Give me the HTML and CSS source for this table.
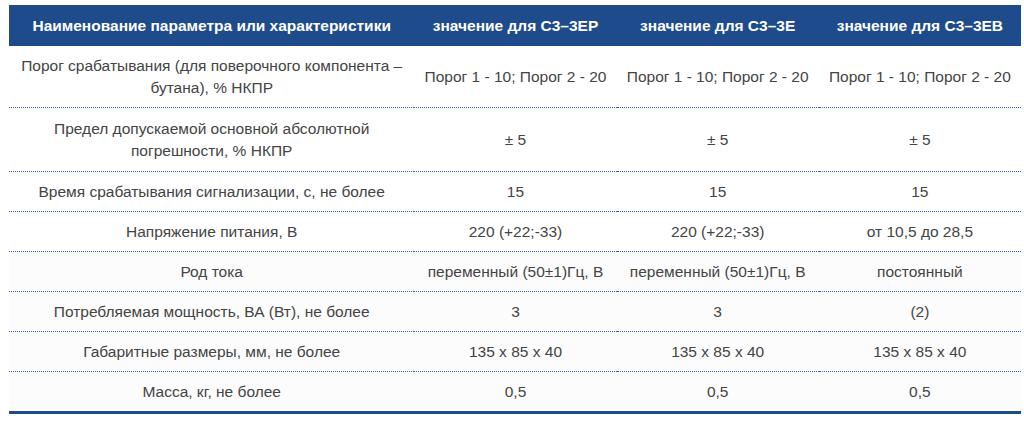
FILE: index.html
```html
<!DOCTYPE html>
<html lang="ru">
<head>
<meta charset="utf-8">
<title>Характеристики</title>
<link rel="stylesheet" href="styles.css">
</head>
<body>
<div class="wrap">
<table class="spec">
  <colgroup>
    <col class="c-name">
    <col class="c-val">
    <col class="c-val">
    <col class="c-val">
  </colgroup>
  <thead>
    <tr>
      <th>Наименование параметра или характеристики</th>
      <th>значение для С3–3ЕР</th>
      <th>значение для С3–3Е</th>
      <th>значение для С3–3ЕВ</th>
    </tr>
  </thead>
  <tbody>
    <tr>
      <td>Порог срабатывания (для поверочного компонента – бутана), % НКПР</td>
      <td>Порог 1 - 10; Порог 2 - 20</td>
      <td>Порог 1 - 10; Порог 2 - 20</td>
      <td>Порог 1 - 10; Порог 2 - 20</td>
    </tr>
    <tr class="tall">
      <td>Предел допускаемой основной абсолютной погрешности, % НКПР</td>
      <td>± 5</td>
      <td>± 5</td>
      <td>± 5</td>
    </tr>
    <tr>
      <td>Время срабатывания сигнализации, с, не более</td>
      <td>15</td>
      <td>15</td>
      <td>15</td>
    </tr>
    <tr>
      <td>Напряжение питания, В</td>
      <td>220 (+22;-33)</td>
      <td>220 (+22;-33)</td>
      <td>от 10,5 до 28,5</td>
    </tr>
    <tr>
      <td>Род тока</td>
      <td>переменный (50±1)Гц, В</td>
      <td>переменный (50±1)Гц, В</td>
      <td>постоянный</td>
    </tr>
    <tr>
      <td>Потребляемая мощность, ВА (Вт), не более</td>
      <td>3</td>
      <td>3</td>
      <td>(2)</td>
    </tr>
    <tr>
      <td>Габаритные размеры, мм, не более</td>
      <td>135 x 85 x 40</td>
      <td>135 x 85 x 40</td>
      <td>135 x 85 x 40</td>
    </tr>
    <tr>
      <td>Масса, кг, не более</td>
      <td>0,5</td>
      <td>0,5</td>
      <td>0,5</td>
    </tr>
  </tbody>
</table>
</div>
</body>
</html>
```

FILE: styles.css
```css
html, body {
  margin: 0;
  padding: 0;
  background: #ffffff;
}

.wrap {
  padding: 5px 3px 0 9px;
}

.spec {
  width: 1012px;
  border-collapse: collapse;
  table-layout: fixed;
  font-family: "Liberation Sans", Arial, sans-serif;
  font-size: 15.5px;
  line-height: 22px;
  color: #444444;
  border-bottom: 3px solid #1d4b8c;
}

.c-name { width: 405px; }
.c-val { width: 202px; }

.spec th {
  background: #1d4b8c;
  color: #ffffff;
  font-weight: bold;
  text-align: center;
  padding: 10px 6px 9px;
  white-space: nowrap;
}

.spec td {
  text-align: center;
  vertical-align: middle;
  padding: 9px 6px 8px;
  border-top: 1px dotted #2f5fa8;
}

.spec tbody tr:first-child td {
  border-top: none;
}

.spec tbody tr.tall td {
  padding-top: 10px;
  padding-bottom: 9px;
}

.spec tbody tr:nth-child(n+5) {
  background: #fcfcfc;
}
```
